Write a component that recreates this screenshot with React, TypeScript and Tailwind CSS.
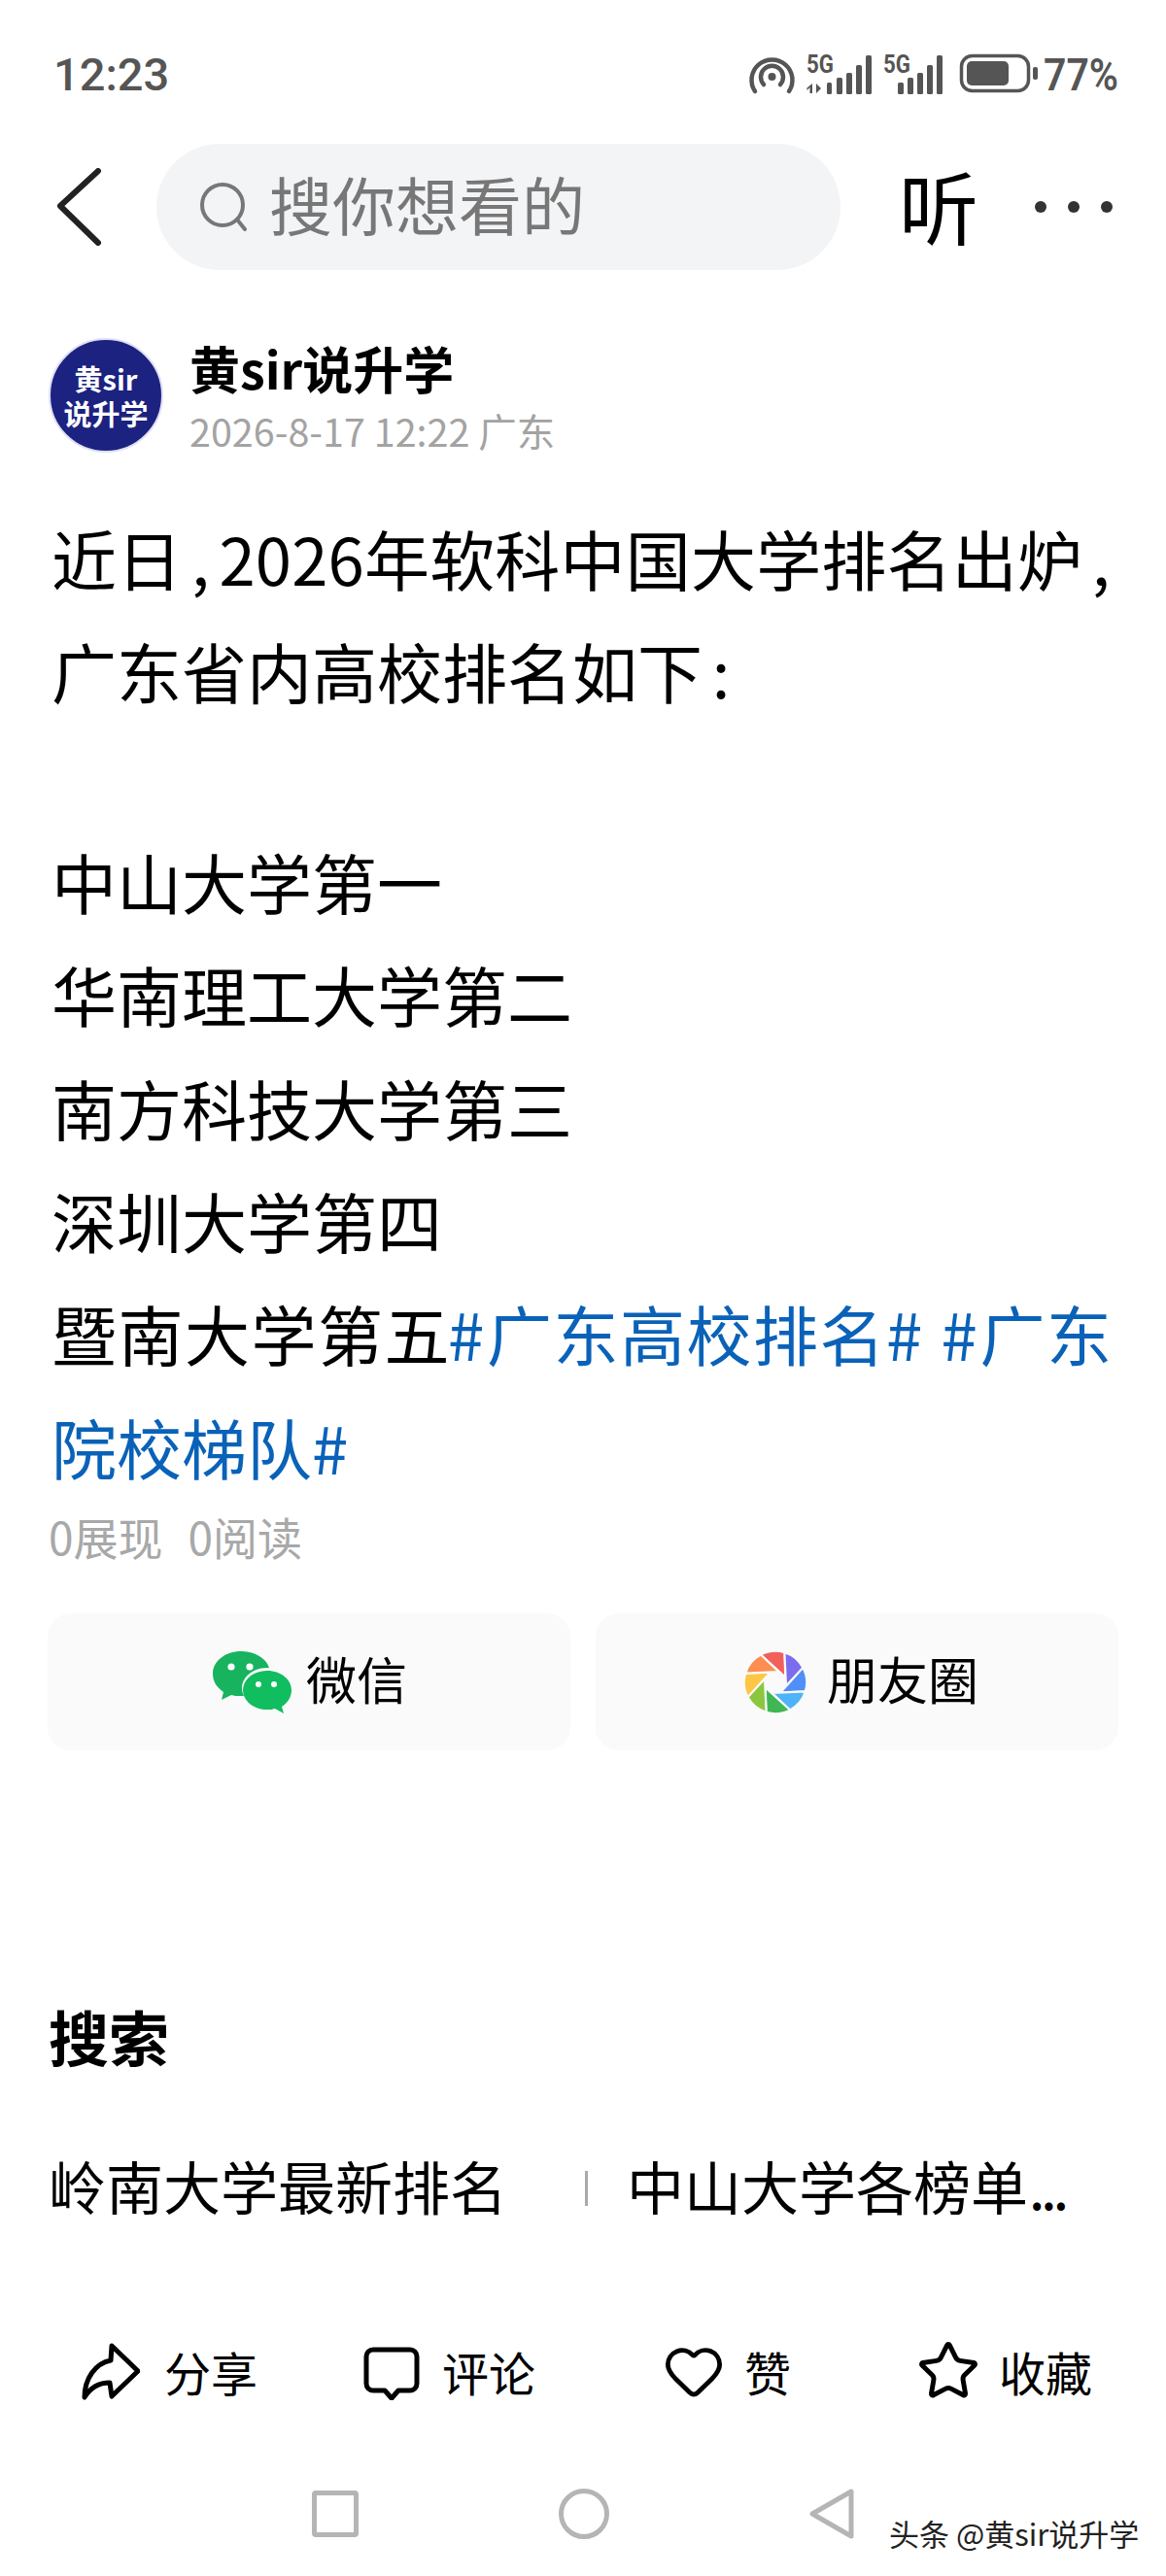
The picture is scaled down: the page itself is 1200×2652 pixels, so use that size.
import { Heart, Star } from 'lucide-react'

const apertureColors = ['#f2605c', '#7c6cf0', '#4f8ff7', '#4fb3f9', '#3fb754', '#8cc63f', '#fdc644', '#fb8e50']

function polar(r: number, deg: number) {
  const a = ((deg - 90) * Math.PI) / 180
  return `${(40 + r * Math.cos(a)).toFixed(2)} ${(40 + r * Math.sin(a)).toFixed(2)}`
}

function MomentsIcon() {
  return (
    <svg width="66" height="66" viewBox="0 0 80 80">
      {apertureColors.map((color, i) => {
        const start = -28 + i * 45
        return (
          <path
            key={color}
            d={`M${polar(39, start)} A39 39 0 0 1 ${polar(39, start + 45)} L${polar(14, start + 90)} Z`}
            fill={color}
            stroke="#fafafa"
            strokeWidth="2.5"
            strokeLinejoin="round"
          />
        )
      })}
    </svg>
  )
}

function WechatIcon() {
  return (
    <svg width="82" height="66" viewBox="0 0 82 66">
      <path d="M29 1C13 1 0 11 0 24c0 8 4 14 11 19l-2 8 10-5c3 1 6 1 10 1 1 0 2 0 3 0-1-2-2-5-2-8 0-12 12-21 26-21 1 0 1 0 2 0C55 8 43 1 29 1z" fill="#18b35f" />
      <path d="M56 21c-14 0-25 9-25 20s11 20 25 20c3 0 5 0 8-1l9 5-2-7c6-4 10-10 10-17 0-11-11-20-25-20z" fill="#10bd5f" />
      <circle cx="19" cy="17" r="3.6" fill="#fff" />
      <circle cx="38" cy="17" r="3.6" fill="#fff" />
      <circle cx="47" cy="35" r="3" fill="#fff" />
      <circle cx="63" cy="35" r="3" fill="#fff" />
    </svg>
  )
}

function StatusIcons() {
  return (
    <svg width="380" height="44" viewBox="772 55 380 44" fill="#555" className="overflow-visible">
      {/* hotspot */}
      <path d="M777 94a21 21 0 1 1 35 0" fill="none" stroke="#555" strokeWidth="4.5" strokeLinecap="round" />
      <path d="M786 87a11.500 11.500 0 1 1 17 0" fill="none" stroke="#555" strokeWidth="4.5" strokeLinecap="round" />
      <circle cx="794.500" cy="79" r="4" />
      {/* sim 1 */}
      <text x="830" y="75" fontFamily="Roboto" fontWeight="700" fontSize="25" textLength="28" lengthAdjust="spacingAndGlyphs">5G</text>
      <path d="M836 86v10h-2.500v-6l-3 3v-2.500zM840 86l5 5-5 5z" />
      <rect x="851" y="85" width="5" height="12" rx="1.500" />
      <rect x="861" y="80" width="6" height="17" rx="1.500" />
      <rect x="871" y="75" width="6" height="22" rx="1.500" />
      <rect x="881" y="67" width="6" height="30" rx="1.500" />
      <rect x="891" y="57" width="6" height="40" rx="1.500" />
      {/* sim 2 */}
      <text x="909" y="75" fontFamily="Roboto" fontWeight="700" fontSize="25" textLength="28" lengthAdjust="spacingAndGlyphs">5G</text>
      <rect x="924" y="85" width="6" height="12" rx="1.500" />
      <rect x="934" y="80" width="6" height="17" rx="1.500" />
      <rect x="944" y="75" width="6" height="22" rx="1.500" />
      <rect x="954" y="67" width="6" height="30" rx="1.500" />
      <rect x="964" y="57" width="6" height="40" rx="1.500" />
      {/* battery */}
      <rect x="989.500" y="57.500" width="69" height="36" rx="11" fill="none" stroke="#555" strokeWidth="3.500" />
      <rect x="995" y="63" width="43" height="25" rx="5" />
      <rect x="1063" y="69" width="5" height="13" rx="2" />
      <text x="1074" y="93" fontFamily="Roboto" fontWeight="600" fontSize="46" textLength="77" lengthAdjust="spacingAndGlyphs">77%</text>
    </svg>
  )
}

const actions = [
  { label: '分享', width: 'w-[289px]', gap: 'gap-[25px]', icon: 'share' },
  { label: '评论', width: 'w-[311px]', gap: 'gap-[22px]', icon: 'comment' },
  { label: '赞', width: 'w-[262px]', gap: 'gap-[22px]', icon: 'heart' },
  { label: '收藏', width: '', gap: 'gap-[22px]', icon: 'star' }
]

function ActionIcon({ name }: { name: string }) {
  if (name === 'share') {
    return (
      <svg width="60" height="60" viewBox="0 0 60 60" fill="none" stroke="#000" strokeWidth="5" strokeLinejoin="round">
        <path d="M31 4L58 30 31 56 29 42C17 42 9 47 3 57 3 38 14 22 30 19z" />
      </svg>
    )
  }
  if (name === 'comment') {
    return (
      <svg width="60" height="60" viewBox="0 0 60 60" fill="none" stroke="#000" strokeWidth="5" strokeLinejoin="round">
        <path d="M11 8h38a7 7 0 0 1 7 7v28a7 7 0 0 1-7 7H37l-7 8-7-8H11a7 7 0 0 1-7-7V15a7 7 0 0 1 7-7z" />
      </svg>
    )
  }
  if (name === 'heart') return <Heart size={64} strokeWidth={1.8} color="#000" className="-mx-[2px]" />
  return <Star size={66} strokeWidth={1.8} color="#000" className="-mx-[3px]" />
}

// commas and hashes sit in wider boxes than the font gives them
function Punct({ children }: { children: string }) {
  return <span className="inline-block w-[38px] text-center">{children}</span>
}

function Hash({ className = '' }: { className?: string }) {
  return <span className={`inline-block w-[40px] tracking-normal ${className}`}>#</span>
}

export default function App() {
  return (
    <div className="relative h-[2652px] w-[1200px] overflow-hidden bg-white font-['Noto_Sans_CJK_SC',sans-serif] text-black">
      {/* status bar */}
      <div className="flex h-[148px] items-center justify-between pl-[55px] pr-[48px] pt-[6px]">
        <span className="font-['Roboto',sans-serif] text-[47px] font-medium text-[#555]">12:23</span>
        <StatusIcons />
      </div>

      {/* search header */}
      <div className="flex h-[130px] items-center pl-[58px]">
        <svg width="48" height="80" viewBox="0 0 48 80" fill="none" stroke="#222" strokeWidth="6" strokeLinecap="round" strokeLinejoin="round">
          <path d="M43 3L4 39l39 38" />
        </svg>
        <div className="ml-[55px] flex h-[130px] w-[704px] items-center rounded-[65px] bg-[#f3f4f6] pl-[44px]">
          <svg width="50" height="50" viewBox="0 0 50 50" fill="none" stroke="#777" strokeWidth="4" strokeLinecap="round">
            <circle cx="24" cy="23" r="21" />
            <path d="M39 38l8 10" />
          </svg>
          <span className="ml-[22px] pb-[8px] text-[65px] leading-none text-[#777]">搜你想看的</span>
        </div>
        <span className="ml-[60px] pb-[4px] text-[82px] leading-none">听</span>
        <div className="ml-[58px] flex items-center gap-[22px]">
          <i className="size-[12px] rounded-full bg-[#333]" />
          <i className="size-[12px] rounded-full bg-[#333]" />
          <i className="size-[12px] rounded-full bg-[#333]" />
        </div>
      </div>

      {/* author */}
      <div className="mt-[70px] flex h-[118px] pl-[50px]">
        <div className="flex size-[118px] flex-col items-center justify-center rounded-full border-2 border-[#dfe0f5] bg-[#1c2280] text-[29px] font-bold leading-[36px] text-white">
          <span>黄sir</span>
          <span>说升学</span>
        </div>
        <div className="ml-[27px] -mt-[2px] flex flex-col">
          <span className="text-[52px] font-bold leading-[66px]">黄sir说升学</span>
          <span className="mt-[3px] text-[39.5px] leading-[56px] text-[#a3a3a3]">2026-8-17 12:22 广东</span>
        </div>
      </div>

      {/* article */}
      <div className="mt-[50px] pl-[53px] text-[67px] leading-[116.4px]">
        <p className="whitespace-nowrap tracking-[0.2px]">
          近日<Punct>,</Punct>2026年软科中国大学排名出炉<Punct>,</Punct>
        </p>
        <p>
          广东省内高校排名如下<Punct>:</Punct>
        </p>
        <div className="h-[100px]" />
        <p>中山大学第一</p>
        <p>华南理工大学第二</p>
        <p>南方科技大学第三</p>
        <p>深圳大学第四</p>
        <p className="whitespace-nowrap tracking-[1.5px]">
          暨南大学第五
          <span className="text-[#0a62b8]">
            <Hash className="-ml-[3px]" />广东高校排名<Hash /> <Hash />广东
          </span>
        </p>
        <p className="text-[#0a62b8]">
          院校梯队<Hash />
        </p>
      </div>

      <div className="mt-[4px] flex h-[60px] items-center gap-[26px] pl-[50px] text-[46px] text-[#a8a8a8]">
        <span>0展现</span>
        <span>0阅读</span>
      </div>

      {/* share buttons */}
      <div className="mt-[50px] flex gap-[26px] pl-[49px]">
        <div className="flex h-[141px] w-[538px] items-center justify-center gap-[14px] rounded-[24px] bg-[#fafafa] pl-[2px] text-[52px]">
          <WechatIcon />
          <span className="pb-[8px]">微信</span>
        </div>
        <div className="flex h-[141px] w-[538px] items-center justify-center gap-[20px] rounded-[24px] bg-[#fafafa] pl-[8px] text-[52px]">
          <MomentsIcon />
          <span className="pb-[8px]">朋友圈</span>
        </div>
      </div>

      {/* related searches */}
      <div className="mt-[254px] flex h-[80px] items-center pl-[50px] text-[62px] font-bold">搜索</div>
      <div className="mt-[74px] flex h-[80px] items-center whitespace-nowrap pl-[50px] text-[59px]">
        <span>岭南大学最新排名</span>
        <i className="ml-[80px] mt-[6px] h-[36px] w-[3px] bg-[#aaa]" />
        <span className="ml-[40px]">
          中山大学各榜单<span className="ml-[2px] text-[44px] font-bold tracking-[-2px]">...</span>
        </span>
      </div>

      {/* bottom actions */}
      <div className="mt-[111px] flex h-[80px] items-center pl-[84px]">
        {actions.map((action) => (
          <div key={action.label} className={`flex items-center ${action.gap} ${action.width}`}>
            <ActionIcon name={action.icon} />
            <span className="text-[48px]">{action.label}</span>
          </div>
        ))}
      </div>

      {/* system nav */}
      <div className="mt-[67px] flex h-[80px] items-center pl-[321px]">
        <div className="w-[254px]">
          <div className="h-[48px] w-[48px] rounded-[4px] border-[5px] border-[#b5b5b5]" />
        </div>
        <div className="w-[258px]">
          <div className="size-[52px] rounded-full border-[5px] border-[#b5b5b5]" />
        </div>
        <svg width="46" height="52" viewBox="0 0 46 52" fill="none" stroke="#b5b5b5" strokeWidth="5" strokeLinejoin="round">
          <path d="M43 3v46L3 26z" />
        </svg>
      </div>

      <span className="absolute left-[915px] top-[2588px] text-[31px] leading-[40px] text-[#222] [text-shadow:0_0_3px_#fff]">头条 @黄sir说升学</span>
    </div>
  )
}
